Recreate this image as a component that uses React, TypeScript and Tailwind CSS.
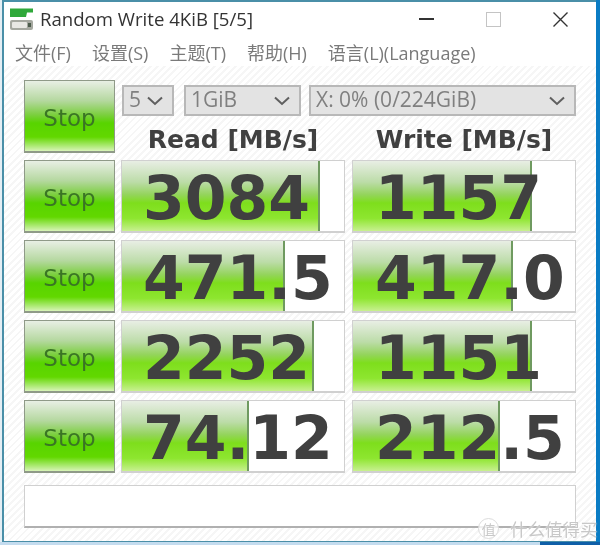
const rows = [
  { read: "3084", readFill: "w-[198px]", write: "1157", writeFill: "w-[179px]" },
  { read: "471.5", readFill: "w-[163px]", write: "417.0", writeFill: "w-[160px]" },
  { read: "2252", readFill: "w-[192px]", write: "1151", writeFill: "w-[179px]" },
  { read: "74.12", readFill: "w-[127px]", write: "212.5", writeFill: "w-[147px]" },
];

const Chevron = () => (
  <svg width="18" height="10" viewBox="0 0 18 10" fill="none" className="shrink-0">
    <path d="M2 1.5 L9 8 L16 1.5" stroke="#5f5f5f" strokeWidth="2" />
  </svg>
);

const StopButton = ({ className }: { className: string }) => (
  <div
    className={`${className} flex items-center justify-center border border-[#8f9a88] border-b-2 bg-[linear-gradient(#e8efe4_0%,#b5d8a0_28%,#7ccf40_48%,#58d400_60%,#62d800_80%,#d8f4b8_100%)] pt-[5px] text-[23px] text-[#3a7524] font-['DejaVu_Sans',sans-serif]`}
  >
    Stop
  </div>
);

const Cell = ({ value, fill, className }: { value: string; fill: string; className: string }) => (
  <div className={`${className} relative flex h-full items-center border border-[#d0d0d0] border-b-2 bg-white`}>
    <div
      className={`${fill} absolute inset-y-0 left-0 border-r-2 border-[#6f9a60] bg-[linear-gradient(#e8eee4_0%,#bcdca8_30%,#94d45c_48%,#7ede1c_60%,#8ee630_82%,#c8f090_100%)]`}
    />
    <span className="relative pt-[4px] text-[60px] font-bold leading-none text-[#404040]">{value}</span>
  </div>
);

const Select = ({ label, className }: { label: string; className: string }) => (
  <div
    className={`${className} flex h-[31px] items-center justify-between border-2 border-[#b8b8b8] bg-[#e3e3e3] pl-[5px] pr-2 text-[21px] text-[#808080] font-['Open_Sans',sans-serif]`}
  >
    <span className="-mt-[1px]">{label}</span>
    <Chevron />
  </div>
);

export default function App() {
  return (
    <div className="relative flex h-[545px] w-[600px] flex-col bg-[#c4dcef] font-['DejaVu_Sans',sans-serif] blur-[0.5px]">
      <div className="flex h-[542px]">
        <div className="w-[2px] bg-[#e4eef4]" />
        <div className="flex w-[594px] flex-col border-b border-l-2 border-t-2 border-[#4a8fa8] bg-white">
          {/* Title bar */}
          <div className="flex h-[34px] items-center pl-[5px] pr-[28px]">
            <svg width="24" height="24" viewBox="0 0 24 24" className="shrink-0">
              <path d="M1 1.5 H24 V5.5 H18 L17 10 H1 Z" fill="#2fa83a" />
              <rect x="1" y="13" width="23" height="10" rx="2" fill="#a5a8a0" />
              <rect x="3" y="15" width="15" height="6" rx="1" fill="#e8e8e4" />
              <rect x="19" y="16" width="3" height="4" fill="#4c5c4c" />
            </svg>
            <span className="ml-[7px] flex-1 text-[18.6px] text-[#333] font-['Open_Sans',sans-serif]">
              Random Write 4KiB [5/5]
            </span>
            <div className="flex items-center gap-[52px]">
              <div className="h-[2px] w-[15px] bg-[#333]" />
              <div className="h-[15px] w-[15px] border border-[#c4c4c4]" />
              <svg width="15" height="15" viewBox="0 0 15 15">
                <path d="M0.5 0.5 L14.5 14.5 M14.5 0.5 L0.5 14.5" stroke="#333" strokeWidth="1.4" />
              </svg>
            </div>
          </div>
          {/* Menu */}
          <div className="flex h-[30px] items-center gap-[21px] pl-[11px] pt-[4px] text-[18px] text-[#7a7a7a] font-['Open_Sans','Noto_Sans_CJK_SC',sans-serif]">
            <span>文件(F)</span>
            <span>设置(S)</span>
            <span>主题(T)</span>
            <span>帮助(H)</span>
            <span>语言(L)(Language)</span>
          </div>
          {/* Client area */}
          <div className="flex flex-1 flex-col bg-[repeating-linear-gradient(135deg,#ffffff_0px,#ffffff_3px,#f6f6f6_3px,#f6f6f6_5px)] pl-[20px] pt-[14px]">
            <div className="grid grid-cols-[91px_224px_225px] grid-rows-[73px_73px_73px_73px_73px] gap-x-[6px] gap-y-[7px]">
              <StopButton className="h-[73px]" />
              <div className="col-span-2 flex flex-col">
                <div className="mt-[5px] flex">
                  <Select label="5" className="ml-[1px] w-[52px]" />
                  <Select label="1GiB" className="ml-[10px] w-[117px]" />
                  <Select label="X: 0% (0/224GiB)" className="ml-[8px] w-[267px]" />
                </div>
                <div className="grid flex-1 grid-cols-2 gap-x-[7px] text-center text-[25px] font-bold leading-none text-[#404040]">
                  <div className="pt-[11px]">Read [MB/s]</div>
                  <div className="pt-[11px]">Write [MB/s]</div>
                </div>
              </div>
              {rows.map((r) => (
                <div key={r.read} className="contents">
                  <StopButton className="h-[73px]" />
                  <Cell value={r.read} fill={r.readFill} className="pl-[21px]" />
                  <Cell value={r.write} fill={r.writeFill} className="ml-[1px] pl-[22px]" />
                </div>
              ))}
            </div>
            <div className="mt-[12px] h-[43px] w-[552px] border border-[#d0d0d0] border-b-2 border-b-[#b0b0b0] bg-white" />
          </div>
        </div>
        <div className="w-[4px] bg-[#0a7cc4]" />
      </div>
      <div className="flex flex-1 justify-end">
        <div className="w-[60px] bg-[#0f5fa8]" />
      </div>
      {/* Watermark */}
      <div className="absolute bottom-[6px] left-[478px] flex items-center text-[#c8c8c8] font-['Noto_Sans_CJK_SC',sans-serif]">
        <div className="flex h-[21px] w-[21px] items-center justify-center rounded-full border border-[#dcdcdc] bg-white/80 text-[14px] leading-none">
          值
        </div>
        <span className="ml-[11px] text-[17.5px] leading-none [text-shadow:0_0_2px_#fff]">什么值得买</span>
      </div>
    </div>
  );
}
